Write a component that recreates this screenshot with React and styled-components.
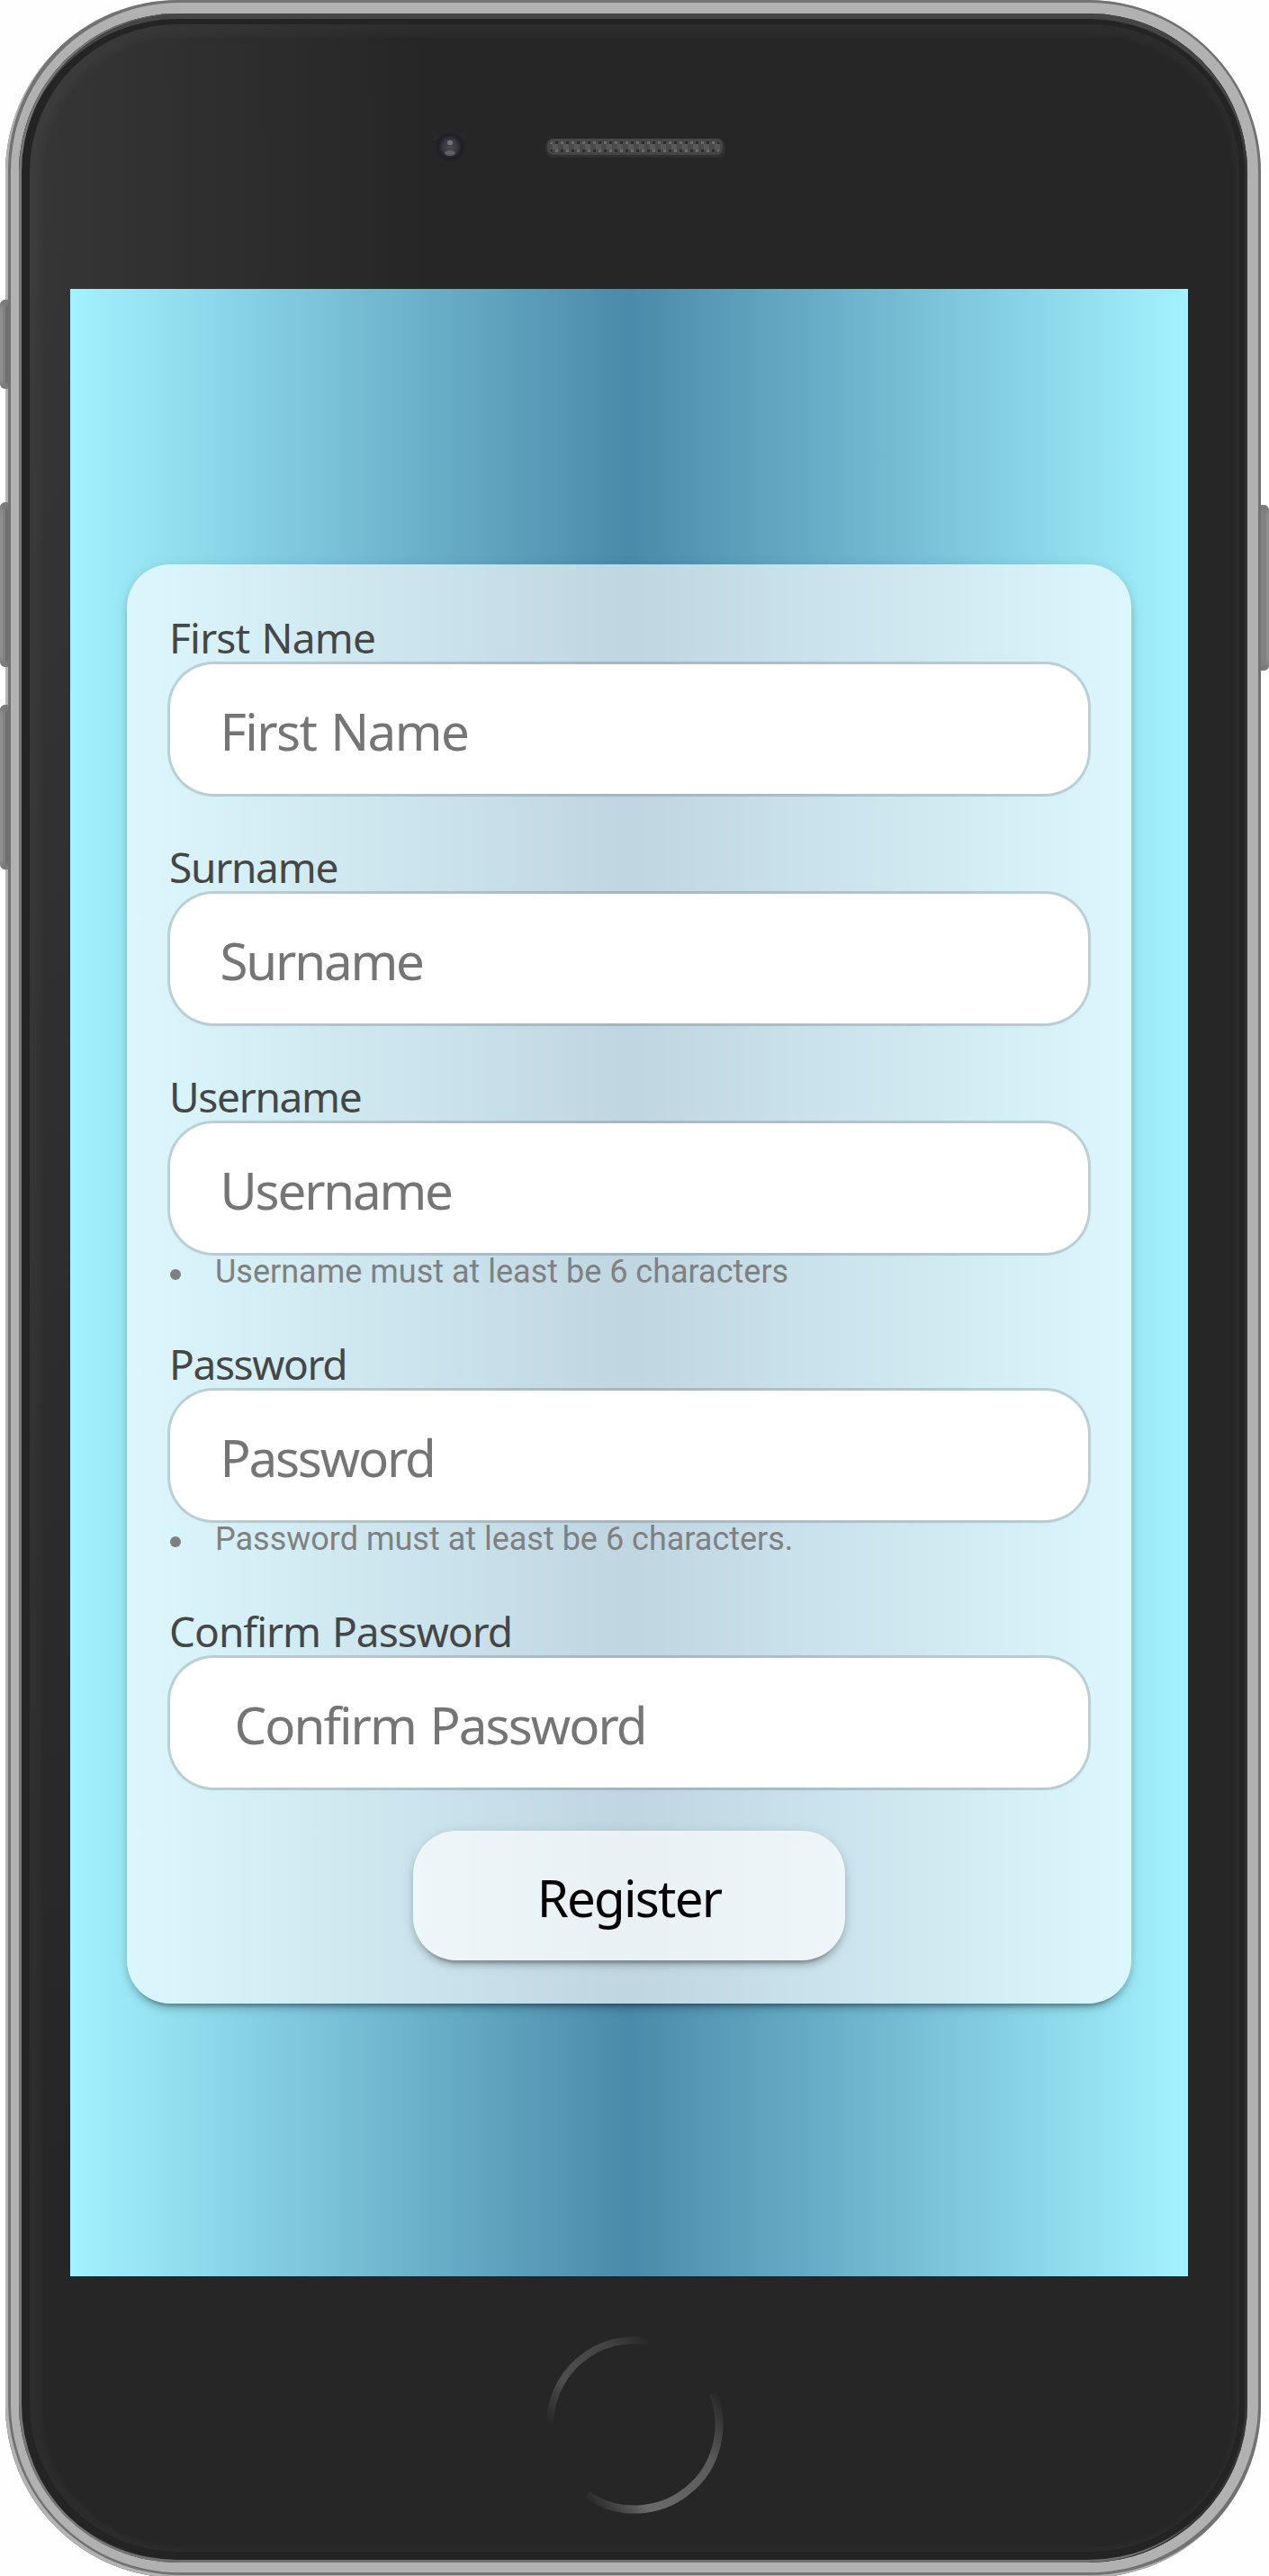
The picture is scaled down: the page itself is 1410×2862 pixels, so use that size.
import React from "react";
import styled, { createGlobalStyle } from "styled-components";

const GlobalStyle = createGlobalStyle`
  *, *::before, *::after { box-sizing: border-box; }
  body { margin: 0; background: #fff; }
`;

const uiFont = `"Noto Sans", "Open Sans", sans-serif`;

const Page = styled.main`
  display: flex;
  width: 1410px;
  height: 2862px;
  overflow: hidden;
  background: #fefefe;
  font-family: ${uiFont};
`;

const Rail = styled.div`
  position: relative;
  z-index: 1;
  flex: none;
  width: 9px;
  padding-top: ${(p) => p.$top}px;
`;

const SideKey = styled.div`
  height: ${(p) => p.$height}px;
  margin-bottom: ${(p) => p.$gap || 0}px;
  border-radius: ${(p) => (p.$right ? "0 6px 6px 0" : "6px 0 0 6px")};
  background: linear-gradient(
    ${(p) => (p.$right ? "to left" : "to right")},
    #8f8f8f 0 3px, #828282 3px 6px, ${(p) => (p.$right ? "#828282" : "#6e6e6e")} 6px
  );
  box-shadow: inset 0 12px 4px -6px #7b7b7b, inset 0 -12px 4px -6px #7b7b7b;
`;

const Shell = styled.div`
  flex: none;
  width: 1395px;
  height: 2864px;
  margin-left: -3px;
  padding: 15px 15px 17px;
  border-radius: 192px;
  background: #b1b1b1;
  box-shadow: inset 3px -3px 0 0 #b3b3b3, inset 1.5px -1.5px 0 4.5px #727272;
`;

const Bezel = styled.div`
  height: 100%;
  padding: 12px 9px 12px 12px;
  border-radius: 176px;
  background: #242424;
  box-shadow: inset 3px 0 0 #777, inset 0 6px 0 #454545, inset -3px 0 0 #333, inset 0 -3px 0 #707070;
`;

const Glass = styled.div`
  display: flex;
  flex-direction: column;
  height: 100%;
  border-radius: 164px;
  padding-left: 45px;
  background: radial-gradient(ellipse 440px 2200px at 0 200px, #363636, #262626);
  box-shadow: inset 4px 4px 8px 8px rgba(255, 255, 255, 0.035);
`;

const TopBar = styled.div`
  display: flex;
  height: 294px;
  padding: 112px 0 0 398px;
`;

const Camera = styled.svg`
  display: block;
  width: 48px;
  height: 48px;
`;

const Speaker = styled.svg`
  display: block;
  width: 202px;
  height: 26px;
  margin: 12px 0 0 81px;
`;

const Screen = styled.div`
  display: flex;
  flex-direction: column;
  flex: none;
  width: 1242px;
  height: 2208px;
  padding: 306px 63px 0;
  background: linear-gradient(to right, #a3f2ff, #4a8aaa 50%, #a3f2ff);
`;

const elevation = `
  0 6px 6px 0 rgba(0, 0, 0, 0.14),
  0 9px 3px -6px rgba(0, 0, 0, 0.2),
  0 3px 15px 0 rgba(0, 0, 0, 0.12)
`;

const Card = styled.form`
  display: flex;
  flex-direction: column;
  height: 1599px;
  padding: 57px 48px 48px;
  border-radius: 48px;
  background: rgba(255, 255, 255, 0.65);
  box-shadow: ${elevation};
`;

const Field = styled.div`
  display: flex;
  flex-direction: column;
  margin-bottom: ${(p) => (p.$last ? 48 : 57)}px;
`;

const Label = styled.label`
  height: 48px;
  margin: 0 0 6px -1px;
  font-size: 46px;
  line-height: 48px;
  letter-spacing: ${(p) => p.$tracking}px;
  word-spacing: 2px;
  white-space: nowrap;
  color: #464646;
`;

const Input = styled.input`
  width: 100%;
  height: 144px;
  padding: 4px 54px 0 ${(p) => p.$indent || 55.5}px;
  border: 0;
  border-radius: 48px;
  outline: none;
  background: #fff;
  box-shadow: 0 0 0 3px rgba(0, 0, 0, 0.14), 0 3px 9px rgba(0, 0, 0, 0.02);
  font-family: ${uiFont};
  font-size: 56.5px;

  &::placeholder {
    color: #757575;
    opacity: 1;
    letter-spacing: ${(p) => p.$tracking}px;
    word-spacing: 3px;
  }
`;

const Hint = styled.div`
  display: flex;
  align-items: center;
  height: 42px;
  font-family: Roboto, sans-serif;
  font-size: 36px;
  line-height: 42px;
  white-space: nowrap;
  color: #808080;

  &::before {
    content: "";
    width: 12px;
    height: 12px;
    margin: 6px 38px 0 0;
    border-radius: 50%;
    background: #808080;
  }
`;

const RegisterButton = styled.button`
  align-self: center;
  width: 480px;
  height: 144px;
  padding: 4px 0 0;
  border: 0;
  border-radius: 48px;
  background: rgba(255, 255, 255, 0.65);
  box-shadow: ${elevation};
  font-family: ${uiFont};
  font-size: 56.5px;
  letter-spacing: -1.8px;
  color: #000;
`;

const HomeButton = styled.svg`
  display: block;
  width: 220px;
  height: 220px;
  margin: 55px 0 0 517px;
`;

const fields = [
  { id: "first", label: "First Name", labelTracking: -0.8, tracking: -1.6 },
  { id: "surname", label: "Surname", labelTracking: -1.25, tracking: -2.2 },
  {
    id: "username",
    label: "Username",
    labelTracking: -1.3,
    tracking: -2.2,
    hint: "Username must at least be 6 characters",
  },
  {
    id: "password",
    label: "Password",
    type: "password",
    labelTracking: -1.35,
    tracking: -2.2,
    hint: "Password must at least be 6 characters.",
  },
  {
    id: "confirm",
    label: "Confirm Password",
    type: "password",
    labelTracking: -1,
    tracking: -1.95,
    indent: 71.5,
  },
];

function CameraLens() {
  return (
    <Camera viewBox="0 0 48 48">
      <defs>
        <radialGradient id="lens">
          <stop offset="0" stopColor="#4a4a4e" />
          <stop offset="0.36" stopColor="#38383e" />
          <stop offset="0.6" stopColor="#1f1e24" />
          <stop offset="1" stopColor="#28272c" stopOpacity="0" />
        </radialGradient>
      </defs>
      <path d="M4 16 Q22 -4 42 14 L34 18 Q22 8 10 18Z" fill="#303034" opacity="0.7" />
      <circle cx="24" cy="24" r="22" fill="url(#lens)" />
      <rect x="21" y="17" width="6" height="5" rx="2" fill="#747478" />
      <ellipse cx="24" cy="31" rx="6" ry="3" fill="#606064" />
    </Camera>
  );
}

function SpeakerGrille() {
  return (
    <Speaker viewBox="0 0 202 26">
      <defs>
        <pattern id="mesh" x="6" y="6" width="12" height="12" patternUnits="userSpaceOnUse">
          <rect width="12" height="12" fill="#4a4a4a" />
          <rect width="3" height="3" fill="#6a6a6a" />
          <rect x="6" width="3" height="3" fill="#2c2c2c" />
          <rect x="3" y="3" width="6" height="6" fill="#585858" />
          <rect y="9" width="3" height="3" fill="#2c2c2c" />
          <rect x="6" y="9" width="3" height="3" fill="#6a6a6a" />
        </pattern>
      </defs>
      <rect x="1" y="3" width="200" height="21" rx="8" fill="#303030" />
      <rect x="3" y="3" width="195" height="18" rx="7" fill="#464646" />
      <rect x="6" y="6" width="189" height="12" rx="4" fill="url(#mesh)" />
    </Speaker>
  );
}

function HomeRing() {
  return (
    <HomeButton viewBox="0 0 220 220">
      <defs>
        <linearGradient id="upper" x1="16" y1="112" x2="128" y2="16" gradientUnits="userSpaceOnUse">
          <stop offset="0" stopColor="#262626" />
          <stop offset="0.3" stopColor="#4e4e4e" />
          <stop offset="0.75" stopColor="#424242" />
          <stop offset="1" stopColor="#262626" />
        </linearGradient>
        <linearGradient id="lower" x1="198" y1="68" x2="52" y2="188" gradientUnits="userSpaceOnUse">
          <stop offset="0" stopColor="#262626" />
          <stop offset="0.28" stopColor="#5a5a5a" />
          <stop offset="0.75" stopColor="#6a6a6a" />
          <stop offset="1" stopColor="#262626" />
        </linearGradient>
      </defs>
      <path d="M16 110 A94 94 0 0 1 126.300 17.400" fill="none" stroke="url(#upper)" strokeWidth="8" />
      <path d="M197.200 74.800 A94 94 0 0 1 57.400 187.900" fill="none" stroke="url(#lower)" strokeWidth="9" />
    </HomeButton>
  );
}

export default function App() {
  return (
    <Page>
      <GlobalStyle />
      <Rail $top={333}>
        <SideKey $height={99} $gap={126} />
        <SideKey $height={183} $gap={42} />
        <SideKey $height={183} />
      </Rail>
      <Shell>
        <Bezel>
          <Glass>
            <TopBar>
              <CameraLens />
              <SpeakerGrille />
            </TopBar>
            <Screen>
              <Card onSubmit={(e) => e.preventDefault()}>
                {fields.map((f, i) => (
                  <Field key={f.id} $last={i === fields.length - 1}>
                    <Label htmlFor={f.id} $tracking={f.labelTracking}>{f.label}</Label>
                    <Input
                      id={f.id}
                      type={f.type || "text"}
                      placeholder={f.label}
                      $indent={f.indent}
                      $tracking={f.tracking}
                    />
                    {f.hint && <Hint>{f.hint}</Hint>}
                  </Field>
                ))}
                <RegisterButton type="submit">Register</RegisterButton>
              </Card>
            </Screen>
            <HomeRing />
          </Glass>
        </Bezel>
      </Shell>
      <Rail $top={561}>
        <SideKey $right $height={184} />
      </Rail>
    </Page>
  );
}
